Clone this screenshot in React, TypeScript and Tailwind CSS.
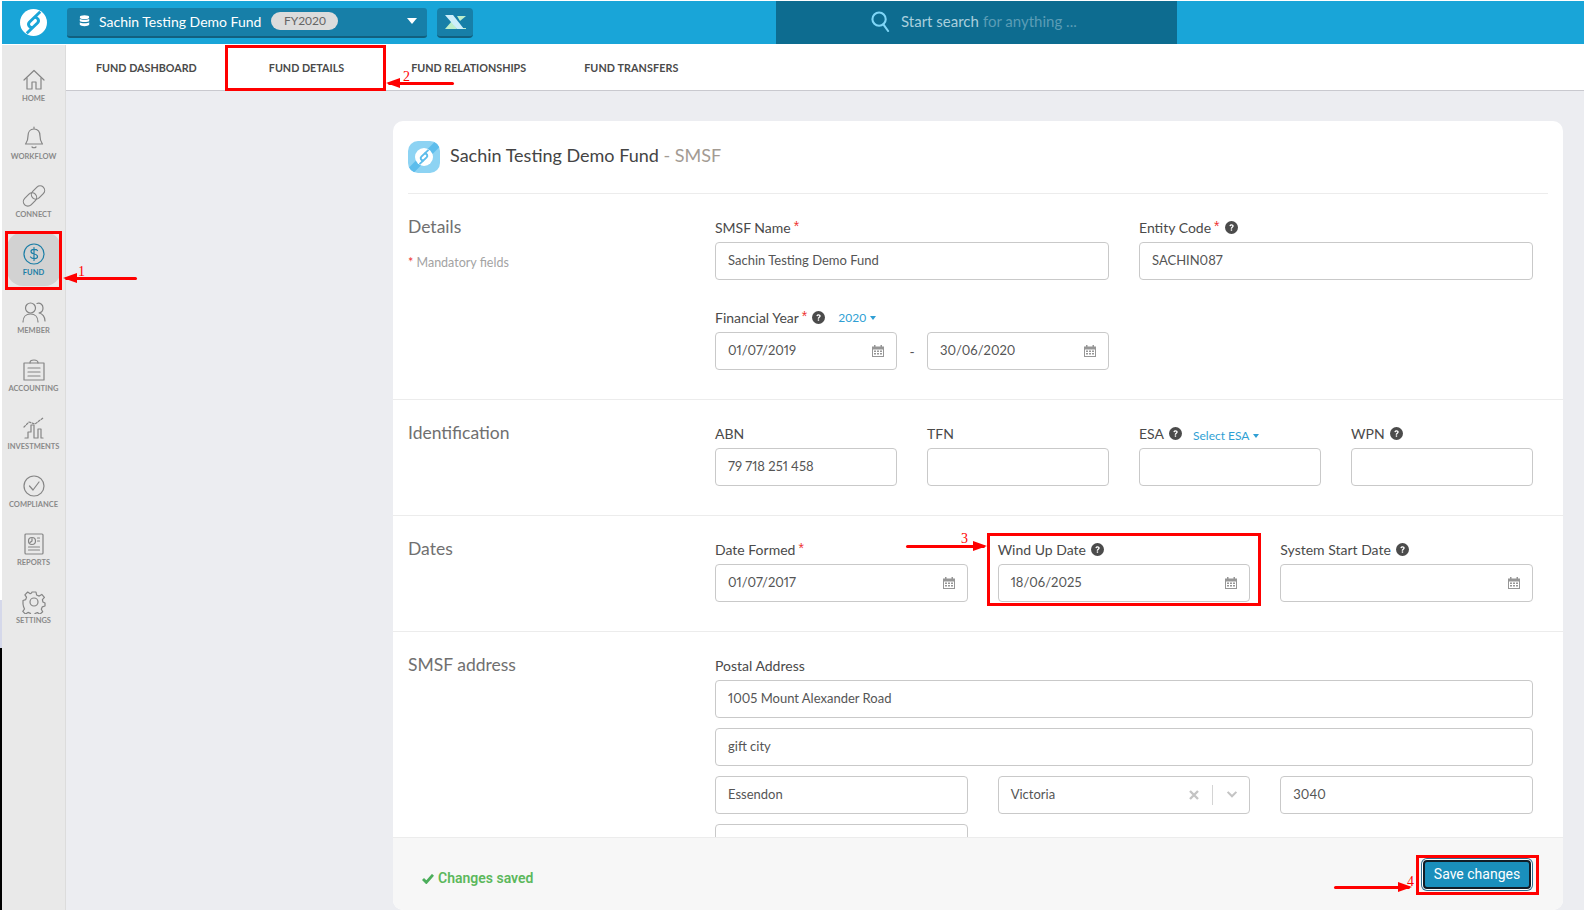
import type { ReactNode } from 'react';

const font = "font-['Lato','Noto_Sans',sans-serif]";

const Stroke = ({ children, active }: { children: ReactNode; active?: boolean }) => (
  <svg
    viewBox="0 0 24 24"
    fill="none"
    stroke={active ? '#1c7ea6' : '#858585'}
    strokeWidth="1.200"
    strokeLinecap="round"
    strokeLinejoin="round"
    className="h-[24px] w-[24px]"
  >
    {children}
  </svg>
);

const navItems: { label: string; icon: ReactNode; active?: boolean }[] = [
  {
    label: 'HOME',
    icon: (
      <>
        <path d="M2 12 12 2.500 22 12" />
        <path d="M5 10v11h5v-7h4v7h5V10" />
      </>
    ),
  },
  {
    label: 'WORKFLOW',
    icon: (
      <>
        <path d="M12 1v2M12 3c-4 0-6 3-6 7 0 5-1.500 6.500-2.500 8h17c-1-1.500-2.500-3-2.500-8 0-4-2-7-6-7Z" />
        <path d="M10 21c1 1 3 1 4 0" />
      </>
    ),
  },
  {
    label: 'CONNECT',
    icon: (
      <>
        <rect x="0.500" y="11" width="15" height="9" rx="4.500" transform="rotate(-45 8 15.500)" />
        <rect x="8.500" y="4" width="15" height="9" rx="4.500" transform="rotate(-45 16 8.500)" />
      </>
    ),
  },
  {
    label: 'FUND',
    active: true,
    icon: (
      <>
        <circle cx="12" cy="12" r="10" />
        <path d="M15.500 8.500c-1-1.500-6.500-2-6.500 1 0 3.500 6.500 1.500 6.500 5 0 3-5.500 2.500-7 .5M12 5.500v13" />
      </>
    ),
  },
  {
    label: 'MEMBER',
    icon: (
      <>
        <circle cx="8.500" cy="8" r="5" />
        <path d="M1 22c0-5 3-8 7.500-8s7.500 3 7.500 8" />
        <path d="M15 3.500c3-1 6 1 6 4.500 0 2.500-1.500 4.500-4 5 3.500.5 6 4 6 8" />
      </>
    ),
  },
  {
    label: 'ACCOUNTING',
    icon: (
      <>
        <rect x="2" y="5" width="20" height="17" />
        <path d="M8 5c0-2 1-3 4-3s4 1 4 3M6 10h12M6 14h12M6 18h12" />
      </>
    ),
  },
  {
    label: 'INVESTMENTS',
    icon: (
      <>
        <path d="M3 22h3v-6h3V9h3v13h4V13h3v9h2" />
        <path d="M2 11l5-5 6 2 8-6" strokeDasharray="2 1.500" />
      </>
    ),
  },
  {
    label: 'COMPLIANCE',
    icon: (
      <>
        <circle cx="12" cy="12" r="10" />
        <path d="m7.500 12 3.500 4 6-8" />
      </>
    ),
  },
  {
    label: 'REPORTS',
    icon: (
      <>
        <rect x="3" y="2" width="18" height="20" rx="1" />
        <circle cx="10" cy="9" r="3.500" />
        <path d="M10 6.500V9l-2 1.500M15.500 6h2M15.500 9h2M6.500 15h11M6.500 18h11" />
      </>
    ),
  },
  {
    label: 'SETTINGS',
    icon: (
      <>
        <circle cx="12" cy="12" r="4" />
        <path d="M10 2h4l.6 3 2.600 1.100 2.600-1.700 2.600 3-2 2.300.5 2.300 2.100 1v3l-2.700.8-1 2.500 1.400 2.500-2.800 2.400-2.500-1.600-2.400.9-.6 2.500h-3.200l-.8-2.600-2.400-1-2.500 1.700-2.700-2.700 1.700-2.400-1-2.500L1 14v-3.500l2.700-.9.800-2.400-1.600-2.400L5.700 2l2.500 1.700 1.300-.7L10 2Z" />
      </>
    ),
  },
];

// white disc cut by a diagonal chain
const ChainMark = ({ color }: { color: string }) => (
  <svg viewBox="0 0 24 24" className="h-full w-full" fill="none" stroke={color} strokeWidth="2.600">
    <path d="M18 2.500 8.500 11.500C6.500 13.500 8 17 11.500 16.500" />
    <path d="M6 21.500 15.500 12.500C17.500 10.500 16 7 12.500 7.500" />
  </svg>
);

const Help = () => (
  <svg viewBox="0 0 16 16" className="h-[13px] w-[13px] shrink-0">
    <circle cx="8" cy="8" r="8" fill="#4b4b4b" />
    <path
      d="M5.400 6.200C5.600 4.800 6.700 4 8.100 4c1.500 0 2.600.9 2.600 2.200 0 1-.6 1.500-1.300 2-.5.400-.7.600-.7 1.200H7.100c0-1.100.4-1.600 1.100-2.100.5-.4.800-.6.800-1 0-.5-.4-.8-.9-.8-.6 0-1 .4-1.100 1Z"
      fill="#fff"
    />
    <rect x="7.100" y="10.300" width="1.700" height="1.700" fill="#fff" />
  </svg>
);

const Calendar = () => (
  <svg viewBox="0 0 14 14" className="h-[14px] w-[14px] shrink-0" fill="#969696">
    <path d="M1 2.500h2V1h1.500v1.500h5V1H11v1.500h2V13H1Zm1 3V12h10V5.500Z" />
    <path d="M3 6.500h2v1.500H3Zm3 0h2v1.500H6Zm3 0h2v1.500H9Zm-6 2.500h2v1.500H3Zm3 0h2v1.500H6Zm3 0h2v1.500H9Z" />
  </svg>
);

const Caret = ({ className }: { className: string }) => (
  <span className={`inline-block h-0 w-0 border-x-[3.500px] border-t-[4px] border-x-transparent ${className}`} />
);

const Label = ({ text, required, help, children }: { text: string; required?: boolean; help?: boolean; children?: ReactNode }) => (
  <div className="mb-[5px] flex h-[19px] items-center text-[14px] text-[#4a4a4a]">
    <span>{text}</span>
    {required && <span className="ml-[3px] font-['Liberation_Sans',sans-serif] text-[14px] leading-none -mt-[3px] text-[#e33]">*</span>}
    {help && (
      <span className="ml-[5px]">
        <Help />
      </span>
    )}
    {children}
  </div>
);

const Input = ({ value, date, children }: { value?: string; date?: boolean; children?: ReactNode }) => (
  <div className="flex h-[38px] items-center justify-between rounded-[4px] border border-[#c9c9c9] bg-white pb-px pl-[12px] pr-[11px] text-[13px] text-[#555] proportional-nums">
    <span>{value}</span>
    {date && <Calendar />}
    {children}
  </div>
);

const Section = ({ title, note, last, children }: { title: string; note?: boolean; last?: boolean; children: ReactNode }) => (
  <section className={`flex pl-[15px] pr-[30px] ${last ? 'pt-[24px]' : 'border-b border-[#ececec] pt-[24px] pb-[29px]'}`}>
    <div className="w-[307px] shrink-0">
      <h3 className="-mt-[3px] text-[17.500px] leading-[24px] text-[#707070]">{title}</h3>
      {note && (
        <p className="mt-[15px] text-[12.500px] text-[#a3a3a3]">
          <span className="text-[#e33]">*</span> Mandatory fields
        </p>
      )}
    </div>
    <div className="min-w-0 flex-1">{children}</div>
  </section>
);

// red markup drawn on top of the screenshot
const Arrow = ({ className, dir, num, numClass }: { className: string; dir: 'left' | 'right'; num: string; numClass: string }) => (
  <div className={`absolute h-[3px] rounded-full bg-[#f00] ${className}`}>
    <span
      className={`absolute top-[-4px] h-0 w-0 border-y-[5.500px] border-y-transparent ${
        dir === 'left' ? 'left-[-2px] border-r-[14px] border-r-[#f00]' : 'right-[-2px] border-l-[14px] border-l-[#f00]'
      }`}
    />
    <span className={`absolute font-['Liberation_Serif',serif] text-[14px] leading-none text-[#f00] ${numClass}`}>{num}</span>
  </div>
);

export default function App() {
  return (
    <div className={`${font} relative flex h-[910px] w-[1584px] flex-col overflow-hidden bg-white`}>
      {/* top bar */}
      <header className="mt-px ml-[2px] flex h-[43px] shrink-0 items-center bg-[#19a5d8]">
        <div className="ml-[18px] h-[27px] w-[27px] rounded-full bg-white">
          <ChainMark color="#19a5d8" />
        </div>
        <div className="ml-[20px] flex h-[30px] w-[360px] items-center rounded-[3px] border-b-2 border-[#11607f] bg-[#177fa8] pb-px pl-[12px] pr-[10px] text-[14px] text-white">
          <svg viewBox="0 0 12 14" className="h-[12px] w-[11px]" fill="#fff">
            <ellipse cx="6" cy="2.500" rx="5.500" ry="2.300" />
            <path d="M.500 4.500C1.500 6 10.500 6 11.500 4.500V7C10.500 8.500 1.500 8.500.500 7Zm0 4C1.500 10 10.500 10 11.500 8.500v3C10.500 13.500 1.500 13.500.500 11.500Z" />
          </svg>
          <span className="ml-[9px]">Sachin Testing Demo Fund</span>
          <span className="ml-[10px] flex h-[18px] w-[67px] items-center justify-center rounded-full bg-[#dcdcdc] text-[12px] text-[#666]">FY2020</span>
          <Caret className="ml-auto border-x-[5px] border-t-[6px] border-t-white" />
        </div>
        <div className="ml-[10px] flex h-[30px] w-[36px] items-center justify-center rounded-[4px] border-b-2 border-[#11607f] bg-[#177fa8]">
          <svg viewBox="0 0 24 16" className="h-[16px] w-[24px]">
            <path d="M14 2h9l-6 5Z" fill="#bdeecb" />
            <path d="M2 15 9 7l5 8Z" fill="#bdeecb" />
            <path d="M15 14h8v1h-8Z" fill="#bdeecb" />
            <path d="M2 1h8l11 14h-7Z" fill="#cdeefa" />
          </svg>
        </div>
        <div className="ml-[303px] flex h-[43px] w-[401px] items-center bg-[#0d6c90] pb-[2px] pl-[95px] text-[15px]">
          <svg viewBox="0 0 20 22" fill="none" stroke="#7fd6f7" strokeWidth="2.200" strokeLinecap="round" className="h-[21px] w-[19px]">
            <circle cx="8.500" cy="8.500" r="7" />
            <path d="m13 14 5 7" />
          </svg>
          <span className="ml-[11px] text-[#a9cfdd]">Start search</span>
          <span className="ml-[4px] text-[#5b9db6]">for anything ...</span>
        </div>
      </header>

      <div className="mt-px flex min-h-0 flex-1">
        {/* side nav */}
        <nav className="ml-[2px] flex w-[64px] shrink-0 flex-col items-center border-r border-[#dcdcdc] bg-[#e9e9e9] pt-[20px]">
          {navItems.map((item) => (
            <div
              key={item.label}
              className={`flex w-[54px] flex-col items-center ${
                item.active ? '-mt-[7px] mb-[11px] h-[54px] rounded-[16px] bg-[#d2d2d2] pt-[10px]' : 'h-[58px] pt-[3px]'
              }`}
            >
              <Stroke active={item.active}>{item.icon}</Stroke>
              <span className={`mt-[2px] whitespace-nowrap text-[7.500px] font-bold leading-[10px] ${item.active ? 'text-[#1c7ea6]' : 'text-[#8a8a8a]'}`}>
                {item.label}
              </span>
            </div>
          ))}
        </nav>

        <main className="flex min-w-0 flex-1 flex-col bg-[#ecedf1]">
          {/* tabs */}
          <div className="flex h-[46px] shrink-0 items-center border-b border-[#c9c9cf] bg-white pt-[2px] text-[10.750px] font-bold text-[#4a4a4a]">
            <span className="ml-[30px]">FUND DASHBOARD</span>
            <span className="ml-[72px]">FUND DETAILS</span>
            <span className="ml-[67px]">FUND RELATIONSHIPS</span>
            <span className="ml-[58px] tracking-[0.1px]">FUND TRANSFERS</span>
          </div>

          {/* form card */}
          <div className="mt-[30px] ml-[327px] mr-[21px] flex min-h-0 flex-1 flex-col overflow-hidden rounded-[10px] bg-white">
            <div className="min-h-0 flex-1 overflow-hidden">
              <div className="mx-[15px] flex h-[73px] items-center border-b border-[#ececec] pb-[1px]">
                <div className="relative h-[32px] w-[32px] overflow-hidden rounded-[10px] bg-[#8dd3f3]">
                  <div className="absolute left-[13px] top-[-6px] h-[44px] w-[7px] rotate-45 bg-[#5dbdec]" />
                  <div className="absolute inset-[7px] rounded-full bg-white">
                    <ChainMark color="#5dbdec" />
                  </div>
                </div>
                <h2 className="ml-[10px] pb-[2px] text-[18px] text-[#444]">
                  Sachin Testing Demo Fund <span className="text-[#a39b93]">- SMSF</span>
                </h2>
              </div>

              <Section title="Details" note>
                <div className="grid grid-cols-2 gap-x-[30px]">
                  <div>
                    <Label text="SMSF Name" required />
                    <Input value="Sachin Testing Demo Fund" />
                  </div>
                  <div>
                    <Label text="Entity Code" required help />
                    <Input value="SACHIN087" />
                  </div>
                </div>
                <div className="mt-[28px] grid grid-cols-4 gap-x-[30px]">
                  <div className="col-span-2">
                    <Label text="Financial Year" required help>
                      <span className="ml-[13px] text-[12px] text-[#2f9fd4]">2020</span>
                      <Caret className="ml-[4px] border-t-[#2f9fd4]" />
                    </Label>
                    <div className="relative grid grid-cols-2 gap-x-[30px]">
                      <Input value="01/07/2019" date />
                      <Input value="30/06/2020" date />
                      <span className="absolute left-1/2 top-[9px] -translate-x-1/2 text-[14px] text-[#555]">-</span>
                    </div>
                  </div>
                </div>
              </Section>

              <Section title="Identification">
                <div className="grid grid-cols-4 gap-x-[30px]">
                  <div>
                    <Label text="ABN" />
                    <Input value="79 718 251 458" />
                  </div>
                  <div>
                    <Label text="TFN" />
                    <Input />
                  </div>
                  <div>
                    <Label text="ESA" help>
                      <span className="ml-[11px] mt-[4px] text-[12px] text-[#2f9fd4]">Select ESA</span>
                      <Caret className="ml-[4px] mt-[4px] border-t-[#2f9fd4]" />
                    </Label>
                    <Input />
                  </div>
                  <div>
                    <Label text="WPN" help />
                    <Input />
                  </div>
                </div>
              </Section>

              <Section title="Dates">
                <div className="grid grid-cols-3 gap-x-[30px]">
                  <div>
                    <Label text="Date Formed" required />
                    <Input value="01/07/2017" date />
                  </div>
                  <div>
                    <Label text="Wind Up Date" help />
                    <Input value="18/06/2025" date />
                  </div>
                  <div>
                    <Label text="System Start Date" help />
                    <Input date />
                  </div>
                </div>
              </Section>

              <Section title="SMSF address" last>
                <Label text="Postal Address" />
                <div className="flex flex-col gap-[10px]">
                  <Input value="1005 Mount Alexander Road" />
                  <Input value="gift city" />
                  <div className="grid grid-cols-3 gap-x-[30px]">
                    <Input value="Essendon" />
                    <Input value="Victoria">
                      <span className="flex items-center">
                        <svg viewBox="0 0 10 10" className="h-[10px] w-[10px]" fill="none" stroke="#c4c4c4" strokeWidth="2.400">
                          <path d="m1 1 8 8M9 1 1 9" />
                        </svg>
                        <span className="mx-[13px] h-[20px] w-px bg-[#d4d4d4]" />
                        <svg viewBox="0 0 12 8" className="h-[7px] w-[12px]" fill="none" stroke="#c4c4c4" strokeWidth="2.400">
                          <path d="m1 1 5 5 5-5" />
                        </svg>
                      </span>
                    </Input>
                    <Input value="3040" />
                  </div>
                  <div className="grid grid-cols-3 gap-x-[30px]">
                    <Input />
                  </div>
                </div>
              </Section>
            </div>

            {/* save bar */}
            <footer className="flex h-[73px] shrink-0 items-start justify-between border-t border-[#ececec] bg-[#f7f7f7] pl-[29px] pr-[32px] font-['Roboto',sans-serif] text-[14px]">
              <div className="mt-[30px] flex items-center font-semibold text-[#5cb85c]">
                <svg viewBox="0 0 14 12" className="mr-[4px] h-[10px] w-[12px]" fill="none" stroke="#4cae5c" strokeWidth="3.400">
                  <path d="m1 6 4 4 8-9" />
                </svg>
                Changes saved
              </div>
              <button className="mt-[22px] h-[29px] w-[108px] rounded-[4px] border-2 border-[#111d27] bg-[#1a8fbc] text-white shadow-[0_0_0_1px_#fff,0_0_0_2px_#2d6c8e]">
                Save changes
              </button>
            </footer>
          </div>
        </main>
      </div>

      {/* screenshot edge left of the nav */}
      <div className="absolute left-0 top-[600px] h-[48px] w-[2px] bg-[#d5d8ea]" />
      <div className="absolute bottom-0 left-0 top-[648px] w-[2px] bg-black" />

      {/* annotations */}
      <div className="absolute left-[5px] top-[231px] h-[59px] w-[57px] border-[3px] border-[#f00]" />
      <div className="absolute left-[225px] top-[45px] h-[46px] w-[161px] border-[3px] border-[#f00]" />
      <div className="absolute left-[987px] top-[533px] h-[73px] w-[274px] border-[3px] border-[#f00]" />
      <div className="absolute left-[1416px] top-[855px] h-[40px] w-[123px] border-[3px] border-[#f00]" />
      <Arrow className="left-[65px] top-[277px] w-[72px]" dir="left" num="1" numClass="left-[13px] top-[-12px]" />
      <Arrow className="left-[388px] top-[82px] w-[66px]" dir="left" num="2" numClass="left-[15px] top-[-12px]" />
      <Arrow className="left-[906px] top-[545px] w-[79px]" dir="right" num="3" numClass="left-[55px] top-[-13px]" />
      <Arrow className="left-[1334px] top-[886px] w-[76px]" dir="right" num="4" numClass="left-[73px] top-[-11px]" />
    </div>
  );
}
